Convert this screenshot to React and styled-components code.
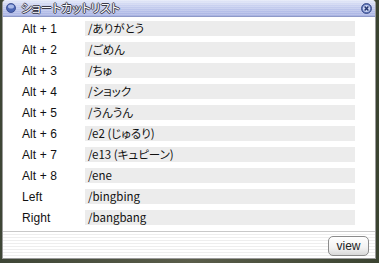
import * as React from "react";
import styled, { createGlobalStyle } from "styled-components";

const GlobalStyle = createGlobalStyle`
  html, body {
    margin: 0;
    padding: 0;
    background: #4b5140;
  }
  body {
    font-family: "MS UI Gothic", "Noto Sans CJK JP", "Liberation Sans", sans-serif;
  }
`;

const Page = styled.div`
  width: 379px;
  height: 263px;
  padding: 0 0 0 2px;
  box-sizing: border-box;
  background: linear-gradient(90deg, #3e4636 0%, #5a5d4a 50%, #3b4431 100%);
`;

const Window = styled.div`
  width: 374px;
  height: 259px;
  box-sizing: border-box;
  display: flex;
  flex-direction: column;
  background: #fff;
  border: 1px solid #9a9a9a;
  border-top: none;
  border-radius: 4px 4px 0 0;
  overflow: hidden;
`;

const TitleBar = styled.div`
  height: 17px;
  flex: none;
  display: flex;
  align-items: center;
  padding: 0 3px 0 3px;
  box-sizing: border-box;
  background:
    repeating-linear-gradient(180deg, rgba(255,255,255,0.18) 0 1px, rgba(255,255,255,0) 1px 2px),
    linear-gradient(180deg, #e4e9f8 0%, #c9d1f0 35%, #b3bde8 75%, #a9b3e2 100%);
  border-bottom: 1px solid #8f9ac8;
`;

const TitleText = styled.span`
  margin-left: 5px;
  font-size: 12px;
  line-height: 14px;
  color: #fafafa;
  font-feature-settings: "palt";
  letter-spacing: -0.2px;
  text-shadow:
    1px 0 0 #3a3a4a, -1px 0 0 #3a3a4a, 0 1px 0 #3a3a4a, 0 -1px 0 #3a3a4a;
`;

const Spacer = styled.div`
  flex: 1;
`;

const List = styled.div`
  flex: 1;
  display: flex;
  flex-direction: column;
  gap: 6px;
  padding: 4px 0 0 0;
`;

const Row = styled.div`
  display: flex;
  align-items: center;
  height: 15px;
`;

const KeyLabel = styled.div`
  width: 63px;
  padding-left: 19px;
  font-size: 12px;
  color: #111;
  font-family: "Liberation Sans", "Noto Sans CJK JP", sans-serif;
  letter-spacing: 0.1px;
`;

const Value = styled.div`
  width: 270px;
  height: 15px;
  background: #ececec;
  padding-left: 3px;
  box-sizing: border-box;
  font-size: 11.5px;
  line-height: 15px;
  color: #111;
  font-feature-settings: "palt";
  white-space: nowrap;
`;

const Footer = styled.div`
  height: 26px;
  flex: none;
  display: flex;
  align-items: center;
  justify-content: flex-end;
  padding-right: 6px;
  border-top: 1px solid #c8c8c8;
  background: repeating-linear-gradient(180deg, #ffffff 0 2px, #eeeeee 2px 3px);
`;

const ViewButton = styled.button`
  width: 41px;
  height: 20px;
  padding: 0;
  border: 1px solid #8c8c8c;
  border-radius: 5px;
  background: linear-gradient(180deg, #ffffff 0%, #f2f2f2 60%, #d9d9d9 100%);
  font-family: "Liberation Sans", sans-serif;
  font-size: 12px;
  color: #222;
  margin-top: 1px;
`;

function TitleIcon() {
  return (
    <svg width="10" height="10" viewBox="0 0 10 10">
      <circle cx="5" cy="5" r="4.5" fill="#4d67b4" stroke="#2e4286" strokeWidth="0.8" />
      <ellipse cx="5" cy="3.6" rx="3" ry="2" fill="#a8b9e8" />
    </svg>
  );
}

function CloseIcon() {
  return (
    <svg width="11" height="11" viewBox="0 0 11 11">
      <circle cx="5.5" cy="5.5" r="5" fill="#6076b8" stroke="#2d3f7c" strokeWidth="0.8" />
      <circle cx="5.5" cy="5.5" r="3.6" fill="#c9d3f1" />
      <path d="M3.6 3.6 L7.4 7.4 M7.4 3.6 L3.6 7.4" stroke="#23346e" strokeWidth="1.4" />
    </svg>
  );
}

const shortcuts = [
  ["Alt + 1", "/ありがとう"],
  ["Alt + 2", "/ごめん"],
  ["Alt + 3", "/ちゅ"],
  ["Alt + 4", "/ショック"],
  ["Alt + 5", "/うんうん"],
  ["Alt + 6", "/e2 (じゅるり)"],
  ["Alt + 7", "/e13 (キュピーン)"],
  ["Alt + 8", "/ene"],
  ["Left", "/bingbing"],
  ["Right", "/bangbang"],
];

export default function App() {
  return (
    <>
      <GlobalStyle />
      <Page>
        <Window>
          <TitleBar>
            <TitleIcon />
            <TitleText>ショートカットリスト</TitleText>
            <Spacer />
            <CloseIcon />
          </TitleBar>
          <List>
            {shortcuts.map(([key, cmd]) => (
              <Row key={key}>
                <KeyLabel>{key}</KeyLabel>
                <Value>{cmd}</Value>
              </Row>
            ))}
          </List>
          <Footer>
            <ViewButton>view</ViewButton>
          </Footer>
        </Window>
      </Page>
    </>
  );
}
